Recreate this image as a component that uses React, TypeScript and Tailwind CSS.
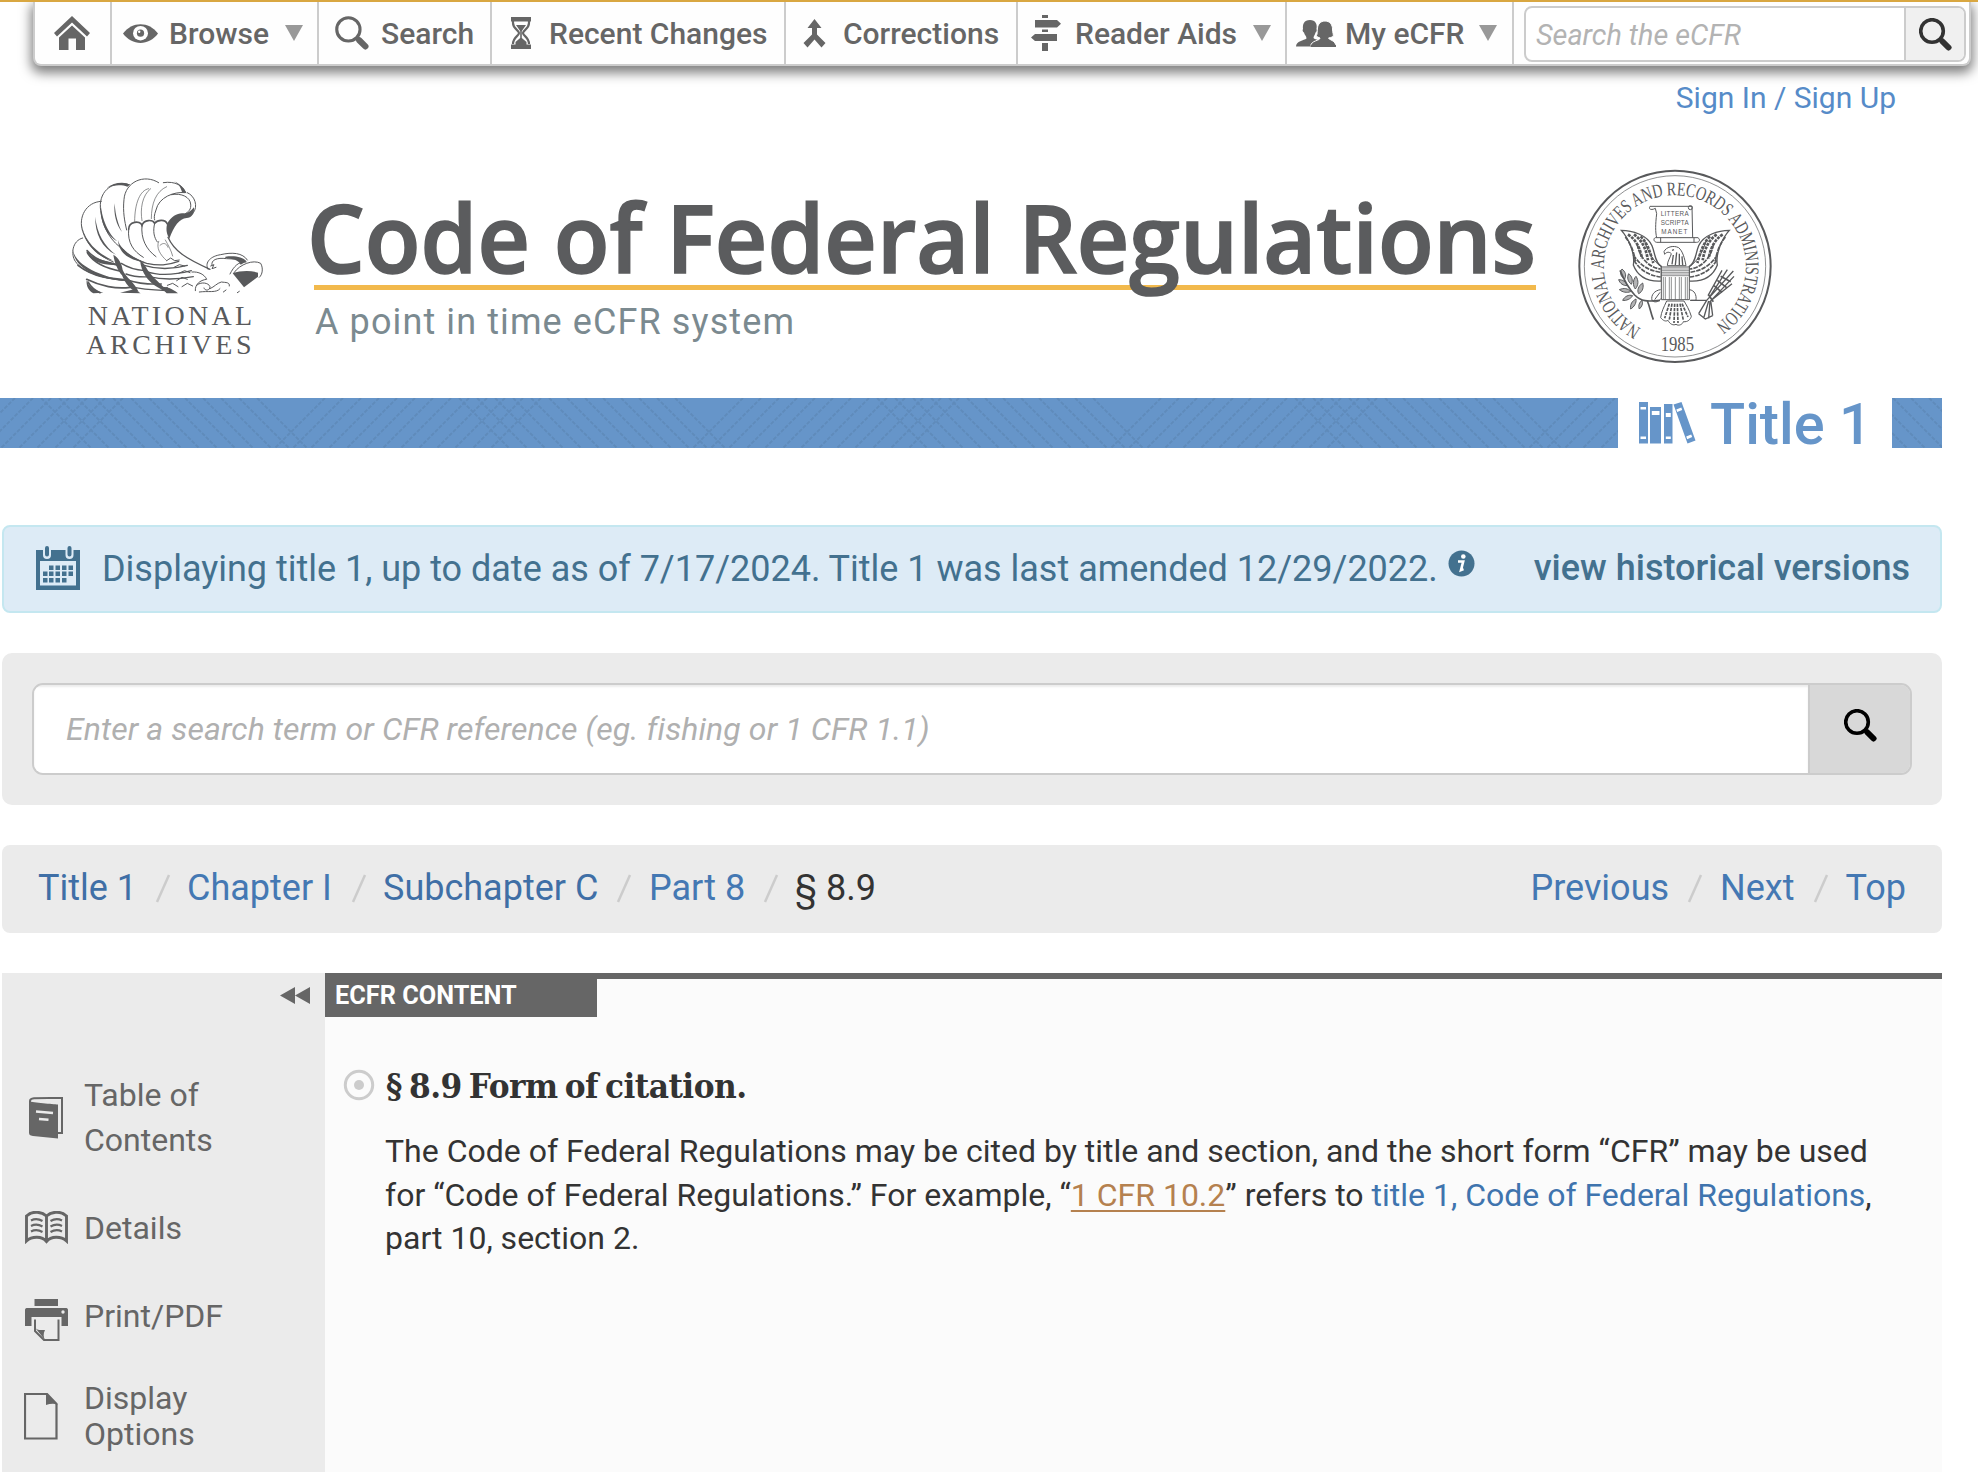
import React from "react";

const ROBOTO = "font-[Roboto,sans-serif]";

function HomeIcon() {
  return (
    <svg width="36" height="34" viewBox="0 0 36 34" fill="#666">
      <path d="M18 0 L36 17 L33 20.500 L18 6.500 L3 20.500 L0 17 Z" />
      <path d="M18 9.500 L31 21.500 V34 H22 V22.500 H14.500 V34 H5 V21.500 Z" />
    </svg>
  );
}

function EyeIcon() {
  return (
    <svg width="35" height="19" viewBox="0 0 35 19">
      <path d="M0 9.500 C9 -3 26 -3 35 9.500 C26 22 9 22 0 9.500 Z" fill="#666" />
      <ellipse cx="17.500" cy="9.200" rx="7.500" ry="7.200" fill="#fff" />
      <circle cx="17.500" cy="9.200" r="3.600" fill="#666" />
      <circle cx="16.200" cy="7.800" r="1.200" fill="#fff" />
    </svg>
  );
}

function Magnifier({ size, color, stroke = 3 }: { size: number; color: string; stroke?: number }) {
  return (
    <svg width={size} height={size} viewBox="0 0 33 33">
      <circle cx="13" cy="13" r="11.300" fill="none" stroke={color} strokeWidth={stroke} />
      <path d="M20.500 20.500 L23.500 23.500" stroke={color} strokeWidth="4" />
      <path d="M23.500 23.500 L29.500 29.500" stroke={color} strokeWidth="6" strokeLinecap="round" />
    </svg>
  );
}

function HourglassIcon() {
  return (
    <svg width="20" height="32" viewBox="0 0 20 32">
      <path d="M0 0 H20 V4.500 H0 Z M0 27.500 H20 V32 H0 Z" fill="#666" />
      <path d="M2 4 V6 C2 12 8 13 8 16 C8 19 2 20 2 27 M18 4 V6 C18 12 12 13 12 16 C12 19 18 20 18 27" fill="none" stroke="#666" strokeWidth="2.200" />
      <path d="M5 8 H15 L10.800 14 V21 L15.500 25 V28 H4.500 V25 L9.200 21 V14 Z" fill="#666" />
    </svg>
  );
}

function MergeIcon() {
  return (
    <svg width="23" height="29" viewBox="0 0 23 29">
      <path d="M11.500 0 L18.500 9 H14 V15.500 L22.500 24 L18.500 28.500 L11.500 20.500 L4.500 28.500 L0.500 24 L9 15.500 V9 H4.500 Z" fill="#666" />
    </svg>
  );
}

function SignpostIcon() {
  return (
    <svg width="30" height="36" viewBox="0 0 30 36" fill="#666">
      <path d="M11 0 H17 V3 H11 Z M4 5 H26 L30 8.700 L26 12.500 H4 Z M11 14.500 H17 V17 H11 Z M4 19 H26 V26 H4 L0 22.500 Z M11 28 H17 V36 H11 Z" />
    </svg>
  );
}

function UsersIcon() {
  return (
    <svg width="40" height="27" viewBox="0 0 40 27">
      <path d="M14 0 C19.500 0 21.500 4 20.500 9 C21.500 10 20.500 12 19.500 12.500 C19 15 17.500 16 17.500 18 C19 20 27 20 28 26.500 H0 C0 21 8 20.500 10.500 18.500 C10.500 16 8.500 15 8 12.500 C7 12 6 10 7 9 C6.500 4 8 0 14 0 Z" fill="#666" />
      <path d="M29 1 C34 1 36.500 5 36.500 9 C36.500 13 38 15 37 16.500 C36 17.500 33 17.500 32.500 18 C33 20 40 20.500 40 26.500 H14.500 C15 20 24 21 24 18 C23 17.500 20.500 17 20.500 15.500 C21.500 14 21 11 21.500 8 C22 4 24.500 1 29 1 Z" fill="#666" stroke="#fff" strokeWidth="1" />
      <path d="M14.500 26 H40" stroke="#666" strokeWidth="2" />
    </svg>
  );
}

function Caret() {
  return (
    <svg width="18" height="16" viewBox="0 0 18 16">
      <path d="M0 0 H18 L9 16 Z" fill="#999" />
    </svg>
  );
}

function NavItem({ className, children }: { className: string; children: React.ReactNode }) {
  return <div className={"flex h-full shrink-0 items-center border-r-2 border-[#ccc] " + className}>{children}</div>;
}

function NavBar() {
  return (
    <nav className="ml-[33px] flex h-[64px] w-[1938px] rounded-b-[8px] border-x-2 border-b-2 border-[#ccc] bg-[#fefefe] text-[30px] font-medium whitespace-nowrap text-[#666] shadow-[0_5px_12px_2px_rgba(0,0,0,0.5)] [clip-path:inset(0_-30px_-30px_-30px)]">
      <NavItem className="w-[77px] pl-[19px]"><HomeIcon /></NavItem>
      <NavItem className="w-[207px] pl-[11px]">
        <EyeIcon />
        <span className="ml-[11px] w-[116px]">Browse</span>
        <Caret />
      </NavItem>
      <NavItem className="w-[173px] pl-[16px]">
        <Magnifier size={34} color="#666" />
        <span className="ml-[12px]">Search</span>
      </NavItem>
      <NavItem className="w-[294px] pl-[19px]">
        <HourglassIcon />
        <span className="ml-[18px]">Recent Changes</span>
      </NavItem>
      <NavItem className="w-[232px] pl-[17px]">
        <MergeIcon />
        <span className="ml-[17px]">Corrections</span>
      </NavItem>
      <NavItem className="w-[269px] pl-[13px]">
        <SignpostIcon />
        <span className="ml-[14px] w-[178px]">Reader Aids</span>
        <Caret />
      </NavItem>
      <NavItem className="w-[227px] pl-[9px]">
        <UsersIcon />
        <span className="ml-[9px] w-[134px]">My eCFR</span>
        <Caret />
      </NavItem>
      <div className="mt-[4px] ml-[10px] flex h-[56px] w-[442px] overflow-hidden rounded-[8px] border-2 border-[#ccc] bg-white">
        <div className="flex w-[378px] items-center pt-[3px] pl-[10px] text-[28.8px] font-normal text-[#b3b3b3] italic">Search the eCFR</div>
        <div className="flex flex-1 items-center justify-center border-l-2 border-[#ccc] bg-[#f0f0f0] pl-px">
          <Magnifier size={33} color="#333" stroke={3.6} />
        </div>
      </div>
    </nav>
  );
}

function ArchivesLogo() {
  return (
    <svg width="240" height="210" viewBox="0 0 720 630" fill="none" stroke="#58595b" strokeLinecap="round">
      <g strokeWidth="3">
        <path d="M98 234 C66 242 62 284 76 304 C98 338 160 356 232 362" />
        <path d="M154 124 C108 126 84 172 98 214 C112 258 146 288 190 306" />
        <path d="M238 74 C180 60 144 100 152 152 C158 206 184 246 222 270" />
        <path d="M326 68 C282 40 226 66 222 118 C218 156 224 184 230 210" />
        <path d="M340 68 C376 62 400 78 406 98 C372 94 326 112 318 150 C312 166 312 174 314 180" />
        <path d="M412 98 C436 108 444 140 430 158 C424 168 416 172 406 168" />
        <path d="M364 104 C396 98 420 112 422 132 C424 148 416 156 404 162" />
        <path d="M296 86 C270 90 254 130 254 184 M302 86 C276 106 270 148 276 182 M350 80 C318 94 304 130 304 176" strokeWidth="2" />
        <path d="M236 208 C236 184 270 180 276 196 C282 178 308 178 314 190 C324 178 346 178 352 192" strokeWidth="5" />
        <path d="M236 208 C232 248 250 274 280 292 M276 196 C272 236 288 268 318 290 M314 190 C308 214 312 232 322 246" />
        <path d="M354 232 C372 272 404 294 480 328" strokeWidth="4" />
        <path d="M326 244 C318 264 330 284 350 302 M346 240 C354 254 364 272 368 288 M330 256 C340 246 350 250 354 262" strokeWidth="2" />
        <path d="M112 272 C134 298 160 306 206 316 M112 278 C132 312 170 326 214 334 M84 316 C130 352 180 356 232 360 M110 358 C150 378 200 388 240 382 M114 366 C124 384 136 392 150 398" strokeWidth="5" />
        <path d="M282 316 C320 328 368 328 412 316 M288 334 C320 346 370 346 424 332 M296 350 C330 358 376 360 430 350 M228 342 C250 350 272 352 300 350 M232 360 C262 370 296 374 334 372 M242 380 C272 388 306 390 350 392" strokeWidth="4" />
        <path d="M222 272 C240 290 262 302 290 310 C328 318 352 316 386 304 M214 310 C236 324 260 330 284 332" strokeWidth="4" />
        <path d="M350 302 L362 294 L374 302 L388 300 M372 322 L388 314 L404 318 M386 340 L404 332 L420 338 M380 362 L396 352 L412 358 M396 380 L412 370 L428 378 M352 376 L368 370 L384 380 M336 388 L352 382 L366 396" />
        <path d="M426 336 C446 334 464 344 470 358 C450 360 434 374 436 392 M440 376 C452 364 476 368 480 380 C480 392 464 394 462 384 M480 386 C494 380 500 370 514 366 C528 368 540 366 538 378 M448 396 C474 392 500 400 510 386 M520 396 L528 390 M562 398 L568 394" />
        <path d="M474 328 C462 306 484 288 512 284 C546 276 578 278 592 300 M486 316 C482 300 500 292 530 296 L574 298 M482 318 L492 314 L486 326 L498 322 M552 338 C570 312 610 298 632 310 C640 324 638 344 628 352" />
        <path d="M540 342 C552 318 566 304 588 306" />
      </g>
      <g fill="#58595b" stroke="none">
        <path d="M352 190 C364 168 384 158 400 160 C410 162 420 156 432 142 C434 162 424 174 410 174 C388 176 372 198 358 236 C348 220 348 204 352 190 Z" />
        <path d="M548 340 C570 332 600 330 624 338 V350 L582 382 Z" />
        <path d="M526 290 C552 286 578 290 590 304 L572 314 C566 300 548 296 526 294 Z" />
        <path d="M94 186 C100 242 142 280 190 302 C154 296 100 262 94 186 Z" />
        <path d="M136 170 C140 220 164 260 198 284 C156 264 134 220 136 170 Z" />
        <path d="M152 130 C156 190 184 230 202 244 C172 228 148 190 152 130 Z" />
        <path d="M194 130 C196 168 206 196 216 216 C200 196 190 164 194 130 Z" />
        <path d="M204 240 C210 268 250 294 284 306 C240 302 206 280 204 240 Z" />
        <path d="M68 268 C78 322 160 350 236 364 C148 360 72 328 68 268 Z" />
        <path d="M108 268 C122 300 170 300 208 314 C160 318 116 306 108 268 Z" />
        <path d="M190 284 C206 292 216 312 218 330 C228 354 252 364 266 396 C240 392 226 370 216 346 C204 330 194 312 190 284 Z" />
        <path d="M270 300 C286 312 290 330 304 344 C318 362 340 376 352 396 C322 384 300 368 288 350 C278 336 272 320 270 300 Z" />
        <path d="M110 360 C116 382 134 392 160 398 L130 400 C116 392 108 378 110 360 Z" />
        <path d="M330 380 C350 380 366 384 384 400 H350 Z M210 398 L252 388 L272 400 Z" />
        <path d="M240 74 C226 64 190 66 170 84 C190 74 216 74 232 80 Z M372 64 C390 72 404 86 410 100 L396 96 C392 82 386 72 372 64 Z" />
      </g>
      <g fill="#58595b" stroke="none" fontFamily="'Liberation Serif', serif" fontSize="84">
        <text x="113" y="496" textLength="493">NATIONAL</text>
        <text x="108" y="583" textLength="497">ARCHIVES</text>
      </g>
    </svg>
  );
}

function SealWing() {
  return (
    <g>
      <path d="M184 226 C216 226 262 240 276 272 C286 296 284 322 304 334 V378 C270 380 236 372 220 330 C226 296 206 250 184 226 Z" strokeWidth="4" />
      <path d="M204 238 C230 256 240 280 246 310 M222 238 C246 256 258 280 264 316 M242 244 C262 264 270 290 280 324" strokeWidth="8" strokeDasharray="9 3" />
      <path d="M196 246 C214 270 222 290 226 320 M220 300 C240 330 262 346 302 352 M222 316 C240 346 268 362 302 366 M232 268 C236 300 262 338 302 342" strokeWidth="5" strokeDasharray="14 3" />
      <path d="M254 258 C262 290 282 320 302 334" strokeWidth="3" />
    </g>
  );
}

function ArchivesSeal() {
  return (
    <svg width="230" height="225" viewBox="0 0 690 675" fill="none" stroke="#58595b">
      <defs>
        <path id="seal-arc" d="M243 521 A213 213 0 1 1 458 514" />
      </defs>
      <circle cx="345" cy="334" r="287" strokeWidth="6" />
      <circle cx="345" cy="334" r="272" strokeWidth="2" />
      <g fill="#58595b" stroke="none" fontFamily="'Liberation Serif', serif">
        <text fontSize="58">
          <textPath href="#seal-arc" textLength="1102" lengthAdjust="spacingAndGlyphs">NATIONAL ARCHIVES AND RECORDS ADMINISTRATION</textPath>
        </text>
        <text x="302" y="587" fontSize="60" textLength="100" lengthAdjust="spacingAndGlyphs">1985</text>
      </g>
      <g strokeWidth="3">
        <path d="M270 154 H396 L398 248 M270 154 C264 164 276 166 286 160 L290 176 C286 210 286 230 290 248" />
        <path d="M286 248 H414 C422 254 418 262 410 262 H290 C280 260 280 250 286 248 Z M302 248 V262 M402 248 V262" />
        <circle cx="391" cy="158" r="6" />
      </g>
      <g fill="#58595b" stroke="none" fontFamily="'Liberation Sans', sans-serif" fontSize="19">
        <text x="302" y="183" textLength="84">LITTERA</text>
        <text x="302" y="210" textLength="84">SCRIPTA</text>
        <text x="304" y="237" textLength="78">MANET</text>
      </g>
      <SealWing />
      <g transform="translate(692 0) scale(-1 1)"><SealWing /></g>
      <g strokeWidth="3">
        <path d="M312 290 C318 276 340 270 356 278 C368 288 374 310 378 332 H322 C322 318 332 306 334 296 C328 290 320 290 314 298 Z" />
        <path d="M336 286 L342 284 M340 300 L336 328 M350 292 L346 330 M358 296 L358 330 M366 304 L368 330" strokeWidth="4" />
        <path d="M304 336 H388 V434 H304 Z" fill="#fff" />
        <path d="M304 342 H388 M304 347 H388 M304 352 H388 M304 357 H388 M304 362 H388" strokeWidth="2" />
        <path d="M310 366 V434 M316 366 V434 M328 366 V434 M334 366 V434 M346 366 V434 M358 366 V434 M364 366 V434 M376 366 V434 M382 366 V434" strokeWidth="2" />
        <path d="M320 438 C312 456 304 470 302 488 C310 498 318 500 324 496 C330 508 340 512 348 508 C356 514 368 508 370 500 C384 502 392 492 394 484 C388 464 378 448 372 438 Z" />
        <path d="M328 446 L314 490 M336 446 L328 494 M344 446 L342 504 M352 446 L354 504 M360 446 L370 496 M366 446 L384 486" strokeWidth="5" strokeDasharray="10 3" />
        <path d="M302 404 C284 406 272 420 276 436 C286 446 298 438 304 430 M300 412 L284 434 M388 404 C404 406 410 420 408 436 L390 436" />
        <path d="M180 346 C190 370 206 400 224 420 C244 440 262 440 300 436 M262 438 C270 456 272 474 280 494" strokeWidth="5" />
        <path d="M186 342 C178 354 182 364 194 372 C200 360 196 350 186 342 Z M176 374 C180 386 190 392 202 392 C198 380 188 374 176 374 Z M206 356 C200 368 204 380 214 388 C220 376 216 364 206 356 Z M178 404 C188 412 200 414 212 410 C204 400 192 398 178 404 Z M228 364 C218 374 218 392 226 402 C236 390 236 376 228 364 Z M188 436 C198 438 212 432 218 422 C206 418 194 424 188 436 Z M248 384 C236 392 230 406 236 416 C248 410 252 396 248 384 Z M212 462 C222 456 230 444 228 432 C216 438 210 448 212 462 Z M238 462 C246 454 250 446 246 436 C238 442 234 452 238 462 Z" fill="#58595b" fillOpacity=".45" />
        <path d="M392 436 H440 M440 436 L520 348 M446 430 L502 344 M444 422 L486 346 M452 438 L522 364 M456 434 L516 386 M440 436 L416 476 M446 438 L432 486 M450 438 L446 490 M452 436 L458 482 M416 476 L436 492 L458 482" strokeWidth="4" />
        <path d="M462 392 L486 412 M472 376 L500 398 M482 364 L512 380 M446 420 L460 440" strokeWidth="5" />
      </g>
    </svg>
  );
}

function PageHeader() {
  return (
    <header className="flex h-[243px] items-start pt-[5px] pl-[50px]">
      <ArchivesLogo />
      <div className="mt-[8px] ml-[21px] w-[1228px]">
        <div className="ml-[3px] h-[122px] w-[1222px] border-b-[5px] border-[#f2b94c]">
          <h1 className="relative -left-[7px] z-10 origin-left scale-x-[0.961] font-['Open_Sans',sans-serif] text-[95px] leading-[136px] font-semibold whitespace-nowrap text-[#5b5c5e] [-webkit-text-stroke:1.6px_#5b5c5e]">
            Code of Federal Regulations
          </h1>
        </div>
        <p className="mt-[10px] ml-[4px] text-[36px] leading-[44px] tracking-[1.1px] text-[#7b8a90]">A point in time eCFR system</p>
      </div>
      <div className="-mt-[5px] ml-[21px]"><ArchivesSeal /></div>
    </header>
  );
}

const lineOffsets = [0, 18, 36, 54, 72, 90, 108, 126, 144, 162, 180, 198, 216];

function TitleStrip() {
  return (
    <div className="relative flex h-[50px] w-[1942px] bg-[#6695c9]">
      <svg className="absolute inset-0" width="1942" height="50">
        <defs>
          <pattern id="hatch" width="418" height="50" patternUnits="userSpaceOnUse">
            <g stroke="#5f8bbb" strokeWidth="2" strokeDasharray="4 1.500">
              {lineOffsets.map((o) => (
                <React.Fragment key={o}>
                  <path d={`M${41 + o} 0 l50 50`} />
                  <path d={`M${325 + o} 0 l-50 50`} />
                  <path d={`M${325 + o - 418} 0 l-50 50`} />
                </React.Fragment>
              ))}
            </g>
          </pattern>
        </defs>
        <rect width="1942" height="50" fill="url(#hatch)" />
      </svg>
      <div className="relative ml-[1618px] flex h-[50px] w-[274px] items-center bg-white pl-[21px]">
        <svg width="57" height="42" viewBox="0 0 57 42" fill="#6695c9">
          <path fillRule="evenodd" d="M0 0 H9 V41.500 H0 Z M1.500 5 V7.500 H7 V5 Z M1.500 34.500 V37 H7 V34.500 Z" />
          <path fillRule="evenodd" d="M11 5 H22 V41.500 H11 Z M12.800 9 V13 H20.500 V9 Z" />
          <path fillRule="evenodd" d="M25 2 H33.500 V41.500 H25 Z M26.800 11 V15 H31.800 V11 Z M26.800 34.500 V37 H31.800 V34.500 Z" />
          <path fillRule="evenodd" d="M34.500 2.500 L42.500 0 L56.500 38.500 L48.500 41.500 Z M37.300 7.500 L38.200 10 L43.200 8 L42.300 5.500 Z M47.200 34.500 L48.200 37.200 L53.200 35 L52.200 32.500 Z" />
        </svg>
        <h2 className="mt-[2px] ml-[14px] text-[57.7px] leading-[50px] font-medium whitespace-nowrap text-[#6695c9]">Title 1</h2>
      </div>
    </div>
  );
}

function CalendarIcon() {
  return (
    <svg className="-mt-[2px]" width="44" height="44" viewBox="0 0 44 44">
      <path fillRule="evenodd" d="M0 4 H44 V44 H0 Z M4 15 V39.500 H40 V15 Z" fill="#43718f" />
      <path d="M11 2 V9 M33.500 2 V9" stroke="#ddebf6" strokeWidth="8" strokeLinecap="round" />
      <path d="M11 2 V8.500 M33.500 2 V8.500" stroke="#43718f" strokeWidth="4" strokeLinecap="round" />
      <path d="M13 19.500h4.500v4.500h-4.500z M19.500 19.500h4.500v4.500h-4.500z M26 19.500h4.500v4.500h-4.500z M32.500 19.500h4.500v4.500h-4.500z M7 25.500h4.500v4.500h-4.500z M13 25.500h4.500v4.500h-4.500z M19.500 25.500h4.500v4.500h-4.500z M26 25.500h4.500v4.500h-4.500z M32.500 25.500h4.500v4.500h-4.500z M7 32h4.500v4.500h-4.500z M13 32h4.500v4.500h-4.500z M19.500 32h4.500v4.500h-4.500z M26 32h4.500v4.500h-4.500z" fill="#43718f" />
    </svg>
  );
}

function InfoIcon() {
  return (
    <svg width="27" height="27" viewBox="0 0 27 27">
      <circle cx="13.500" cy="13.500" r="13" fill="#43718f" />
      <circle cx="15.300" cy="6.500" r="2.300" fill="#fff" />
      <path d="M10 11.500 H15.200 L13 20 L15.500 19" fill="none" stroke="#fff" strokeWidth="2.600" />
    </svg>
  );
}

function DateNotice() {
  return (
    <section className="mt-[77px] ml-[2px] flex h-[88px] w-[1940px] items-center rounded-[8px] border-2 border-[#c4e7f0] bg-[#ddebf6] pl-[32px] text-[36px] whitespace-nowrap text-[#43718f]">
      <CalendarIcon />
      <span className="ml-[22px] w-[1335px] tracking-[-0.01px]">Displaying title 1, up to date as of 7/17/2024. Title 1 was last amended 12/29/2022.</span>
      <span className="mb-[11px] ml-[11px] flex"><InfoIcon /></span>
      <span className="mr-[30px] mb-[2px] ml-auto font-medium">view historical versions</span>
    </section>
  );
}

function SearchPanel() {
  return (
    <section className="mt-[40px] ml-[2px] h-[152px] w-[1940px] rounded-[10px] bg-[#ebebeb] p-[30px]">
      <div className="flex h-[92px] overflow-hidden rounded-[11px] border-2 border-[#ccc]">
        <div className="flex w-[1774px] items-center bg-white pl-[32px] text-[32px] tracking-[0.1px] whitespace-nowrap text-[#b0b0b0] italic shadow-[inset_0_2px_2px_rgba(0,0,0,0.075)]">
          Enter a search term or CFR reference (eg. fishing or 1 CFR 1.1)
        </div>
        <div className="flex flex-1 items-center justify-center border-l-2 border-[#ccc] bg-[#d8d8d8] pb-[8px]">
          <Magnifier size={33} color="#000" stroke={3.6} />
        </div>
      </div>
    </section>
  );
}

function Slash({ className }: { className: string }) {
  return (
    <svg className={className} width="16" height="29" viewBox="0 0 16 29">
      <path d="M14 1 L2 28" stroke="#ccc" strokeWidth="2.500" />
    </svg>
  );
}

function Breadcrumbs() {
  return (
    <section className="mt-[40px] ml-[2px] flex h-[88px] w-[1940px] items-center rounded-[8px] bg-[#ebebeb] pr-[36px] pb-[2px] pl-[36px] text-[36px] whitespace-nowrap text-[#4478b3]">
      <a className="w-[97px] text-[#3f6fa6]">Title 1</a>
      <Slash className="mr-[14px] ml-[20px]" />
      <a className="w-[147px] pl-[2px]">Chapter I</a>
      <Slash className="mr-[16px] ml-[19px]" />
      <a className="w-[217px] text-[#3f6fa6]">Subchapter C</a>
      <Slash className="mr-[17px] ml-[16px]" />
      <a className="w-[99px]">Part 8</a>
      <Slash className="mr-[16px] ml-[15px]" />
      <span className="text-[#333]">§ 8.9</span>
      <a className="ml-auto">Previous</a>
      <Slash className="mr-[17px] ml-[18px]" />
      <a>Next</a>
      <Slash className="mr-[17px] ml-[18px]" />
      <a>Top</a>
    </section>
  );
}

function BookIcon() {
  return (
    <svg width="34" height="42" viewBox="0 0 34 42">
      <path d="M1 36 V4 C1 2 3 1.500 5 1.300 L33 0.800 V36 H29" fill="none" stroke="#666" strokeWidth="2" />
      <path d="M0 4 C4 6 24 7 29 7.500 V41.500 L4 39 C1 38.500 0 38 0 35 Z" fill="#666" />
      <path d="M7 14.500 L24 16 M10 22 L19.500 22.800" stroke="#ebebeb" strokeWidth="2.600" />
    </svg>
  );
}

function OpenBookIcon() {
  return (
    <svg width="43" height="33" viewBox="0 0 43 33" fill="none" stroke="#666">
      <path d="M21.500 5 C17 1 8 -1 1.500 5 V30 C7 25 17 25 21.500 30.500 C26 25 36 25 41.500 30 V5 C35 -1 26 1 21.500 5 Z V30" strokeWidth="2.900" />
      <path d="M6 9.500 C10 7.500 14 8 17.500 10 M6 15 C10 13 14 13.500 17.500 15.500 M6 20.500 C10 18.500 14 19 17.500 21 M25.500 10 C29 8 33 7.500 37 9.500 M25.500 15.500 C29 13.500 33 13 37 15 M25.500 21 C29 19 33 18.500 37 20.500" strokeWidth="2.200" />
    </svg>
  );
}

function PrintIcon() {
  return (
    <svg width="43" height="42" viewBox="0 0 43 42">
      <path d="M9.500 0 H33 V7 H9.500 Z" fill="#666" />
      <path d="M0 27 V11 C0 9.500 1 9 2.500 9 H40.500 C42 9 43 9.500 43 11 V27 H36.500 V18 H6.500 V27 Z" fill="#666" />
      <circle cx="38" cy="13" r="1.700" fill="#ebebeb" />
      <path d="M10 20.500 V32 L19 41 H33.500 V20.500" fill="none" stroke="#666" strokeWidth="2" />
      <path d="M9.500 28 C12 32 16 31 20 31 C18 35 18.500 38 20 41 Z" fill="#666" />
    </svg>
  );
}

function PageIcon() {
  return (
    <svg width="34" height="47" viewBox="0 0 34 47">
      <path d="M1 1 H23 L32.500 11 V45.500 H1 Z" fill="none" stroke="#666" strokeWidth="2.200" />
      <path d="M22 0 L34 12 C30 10 26 11 22 12 Z" fill="#666" />
    </svg>
  );
}

function Sidebar() {
  return (
    <aside className="h-[499px] w-[323px] shrink-0 bg-[#ebebeb] text-[32px] whitespace-nowrap text-[#666]">
      <div className="flex justify-end pt-[14px] pr-[15px]">
        <svg width="30" height="17" viewBox="0 0 30 17" fill="#666">
          <path d="M15 0 V17 L0 8.500 Z M30 0 V17 L15 8.500 Z" />
        </svg>
      </div>
      <div className="mt-[69px] flex h-[90px] items-center">
        <div className="w-[82px] pl-[27px]"><BookIcon /></div>
        <div className="leading-[45px]">Table of<br />Contents</div>
      </div>
      <div className="mt-[42px] flex h-[45px] items-center">
        <div className="w-[82px] pl-[23px]"><OpenBookIcon /></div>
        <div>Details</div>
      </div>
      <div className="mt-[43px] flex h-[45px] items-center">
        <div className="w-[82px] pt-[8px] pl-[23px]"><PrintIcon /></div>
        <div>Print/PDF</div>
      </div>
      <div className="mt-[42px] flex h-[72px] items-center">
        <div className="w-[82px] pl-[22px]"><PageIcon /></div>
        <div className="leading-[36px]">Display<br />Options</div>
      </div>
    </aside>
  );
}

function Content() {
  return (
    <main className="h-[499px] w-[1617px] border-t-[6px] border-[#666] bg-[#fbfbfb]">
      <div className="h-[38px] w-[272px] bg-[#666] pl-[10px] text-[25.3px] leading-[34px] font-bold whitespace-nowrap text-white">ECFR CONTENT</div>
      <div className="mt-[45px] flex h-[46px] items-center pl-[18px]">
        <svg width="32" height="32" viewBox="0 0 32 32">
          <circle cx="16" cy="16" r="13.700" fill="none" stroke="#ccc" strokeWidth="3" />
          <circle cx="16" cy="16" r="5" fill="#ccc" />
        </svg>
        <h3 className="mt-[2px] ml-[11px] origin-left scale-x-[0.92] font-['DejaVu_Serif',serif] text-[34px] font-bold tracking-[-0.6px] [word-spacing:-3.5px] whitespace-nowrap text-[#333]">§ 8.9 Form of citation.</h3>
      </div>
      <p className="mt-[22px] pl-[60px] text-[32px] leading-[43.5px] whitespace-nowrap text-[#333]">
        The Code of Federal Regulations may be cited by title and section, and the short form “CFR” may be used
        <br />
        for “Code of Federal Regulations.” For example, “<a className="text-[#b5814f] underline decoration-2 underline-offset-4">1 CFR 10.2</a>” refers to <a className="text-[#3f74ae]">title 1, Code of Federal Regulations</a>,
        <br />
        part 10, section 2.
      </p>
    </main>
  );
}

export default function App() {
  return (
    <div className={"h-[1472px] w-[1978px] overflow-hidden border-t-2 border-[#d9a741] bg-white " + ROBOTO}>
      <NavBar />
      <div className="flex h-[89px] justify-end pt-[11px] pr-[82px]">
        <a className="text-[30px] leading-[42px] text-[#568bc8]">Sign In / Sign Up</a>
      </div>
      <PageHeader />
      <TitleStrip />
      <DateNotice />
      <SearchPanel />
      <Breadcrumbs />
      <div className="mt-[40px] ml-[2px] flex">
        <Sidebar />
        <Content />
      </div>
    </div>
  );
}
